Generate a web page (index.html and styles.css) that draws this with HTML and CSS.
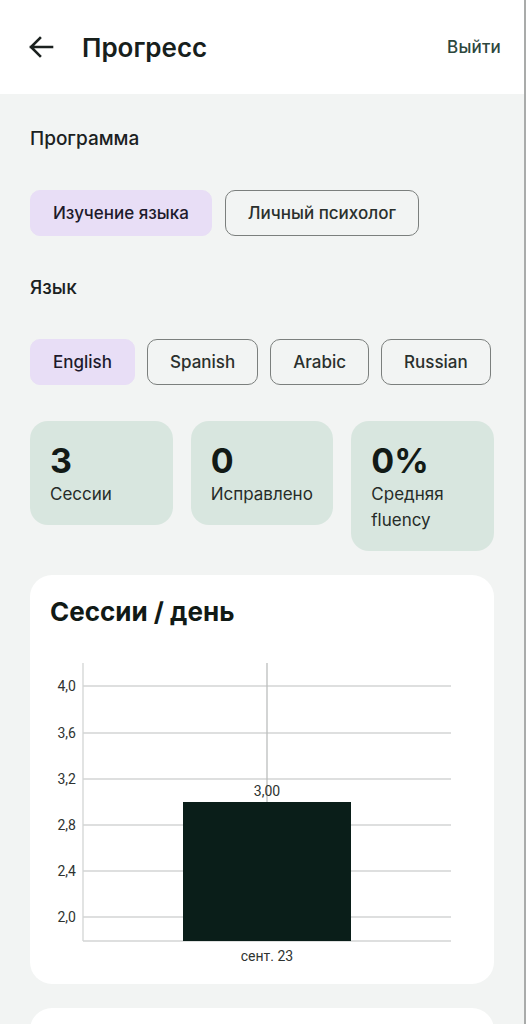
FILE: index.html
```html
<!DOCTYPE html>
<html lang="ru">
<head>
<meta charset="utf-8">
<title>Прогресс</title>
<link rel="stylesheet" href="styles.css">
</head>
<body>
<div class="app">
  <header class="topbar">
    <div class="topbar-left">
      <svg class="back" width="26" height="24" viewBox="0 0 26 24" aria-hidden="true">
        <path d="M24 12H3M12 3L3 12l9 9" fill="none" stroke="#1b211f" stroke-width="2.6" stroke-linecap="square"/>
      </svg>
      <h1 class="title">Прогресс</h1>
    </div>
    <span class="logout">Выйти</span>
  </header>

  <main class="content">
    <h2 class="section-label">Программа</h2>
    <div class="chips">
      <span class="chip chip-active">Изучение языка</span>
      <span class="chip">Личный психолог</span>
    </div>

    <h2 class="section-label">Язык</h2>
    <div class="chips chips-lang">
      <span class="chip chip-active">English</span>
      <span class="chip">Spanish</span>
      <span class="chip">Arabic</span>
      <span class="chip">Russian</span>
    </div>

    <div class="stats">
      <div class="stat">
        <div class="stat-value">3</div>
        <div class="stat-label">Сессии</div>
      </div>
      <div class="stat">
        <div class="stat-value">0</div>
        <div class="stat-label">Исправлено</div>
      </div>
      <div class="stat">
        <div class="stat-value">0%</div>
        <div class="stat-label">Средняя fluency</div>
      </div>
    </div>

    <section class="card chart-card">
      <h3 class="card-title">Сессии / день</h3>
      <svg class="chart" width="465" height="316" viewBox="0 0 465 316">
        <g stroke="#d3d5d4" stroke-width="1.3">
          <line x1="53" y1="36" x2="421" y2="36"/>
          <line x1="53" y1="83" x2="421" y2="83"/>
          <line x1="53" y1="129" x2="421" y2="129"/>
          <line x1="53" y1="175" x2="421" y2="175"/>
          <line x1="53" y1="221" x2="421" y2="221"/>
          <line x1="53" y1="267" x2="421" y2="267"/>
          <line x1="53" y1="291" x2="421" y2="291"/>
          <line x1="53" y1="13" x2="53" y2="291"/>
        </g>
        <line x1="237" y1="13" x2="237" y2="291" stroke="#bcbebd" stroke-width="1.3"/>
        <rect x="153" y="152" width="168" height="139" fill="#0a1e19"/>
        <g class="axis-text" text-anchor="end">
          <text x="46" y="41">4,0</text>
          <text x="46" y="88">3,6</text>
          <text x="46" y="134">3,2</text>
          <text x="46" y="180">2,8</text>
          <text x="46" y="226">2,4</text>
          <text x="46" y="272">2,0</text>
        </g>
        <text class="axis-text" x="237" y="146" text-anchor="middle">3,00</text>
        <text class="axis-text" x="237" y="311" text-anchor="middle">сент. 23</text>
      </svg>
    </section>

    <section class="card next-card"></section>
  </main>
</div>
</body>
</html>
```

FILE: styles.css
```css
* {
  box-sizing: border-box;
}

html, body {
  margin: 0;
  padding: 0;
}

body {
  font-family: Inter, Roboto, "Noto Sans", sans-serif;
  color: #1b211f;
  background: #f2f4f3;
}

.app {
  width: 526px;
  height: 1024px;
  overflow: hidden;
  background: #f2f4f3;
  border-right: 2px solid #a9abaa;
}

.topbar {
  height: 94px;
  background: #ffffff;
  display: flex;
  align-items: center;
  justify-content: space-between;
  padding: 0 23px 0 28px;
}

.topbar-left {
  display: flex;
  align-items: center;
  gap: 28px;
}

.back {
  display: block;
}

.title {
  margin: 0;
  font-size: 26px;
  font-weight: 600;
  color: #17201c;
}

.logout {
  font-size: 17px;
  font-weight: 500;
  letter-spacing: 0.2px;
  color: #2d473d;
}

.content {
  padding: 0 30px;
}

.section-label {
  margin: 0;
  font-size: 19px;
  font-weight: 500;
  line-height: 24px;
  color: #1b211f;
  padding-top: 33px;
  padding-bottom: 39px;
}

.chips + .section-label {
  padding-top: 40px;
}

.chips {
  display: flex;
  gap: 13px;
}

.chips-lang {
  gap: 12px;
}

.chip {
  height: 46px;
  display: inline-flex;
  align-items: center;
  padding: 0 22px;
  border: 1.5px solid #7b7f7d;
  border-radius: 10px;
  font-size: 17px;
  font-weight: 500;
  color: #2a302d;
}

.chip-active {
  background: #e8def6;
  border-color: #e8def6;
  color: #1d1a2b;
}

.stats {
  display: grid;
  grid-template-columns: repeat(3, 1fr);
  gap: 18px;
  align-items: start;
  margin-top: 36px;
}

.stat {
  background: #d8e6df;
  border-radius: 18px;
  padding: 20px 20px 18px;
}

.stat-value {
  font-size: 34px;
  font-weight: 700;
  line-height: 40px;
  color: #121a16;
}

.stat-label {
  font-size: 17px;
  line-height: 26px;
  color: #262c29;
}

.card {
  background: #ffffff;
  border-radius: 22px;
}

.chart-card {
  margin-top: 24px;
  padding-top: 20px;
  padding-bottom: 18px;
}

.card-title {
  margin: 0;
  padding: 0 20px;
  font-size: 26px;
  font-weight: 700;
  line-height: 34px;
  color: #111a16;
}

.chart {
  display: block;
  margin-top: 21px;
}

.axis-text {
  font-family: Roboto, Inter, sans-serif;
  font-size: 14px;
  fill: #2e3331;
}

.next-card {
  margin-top: 24px;
  height: 60px;
}
```
